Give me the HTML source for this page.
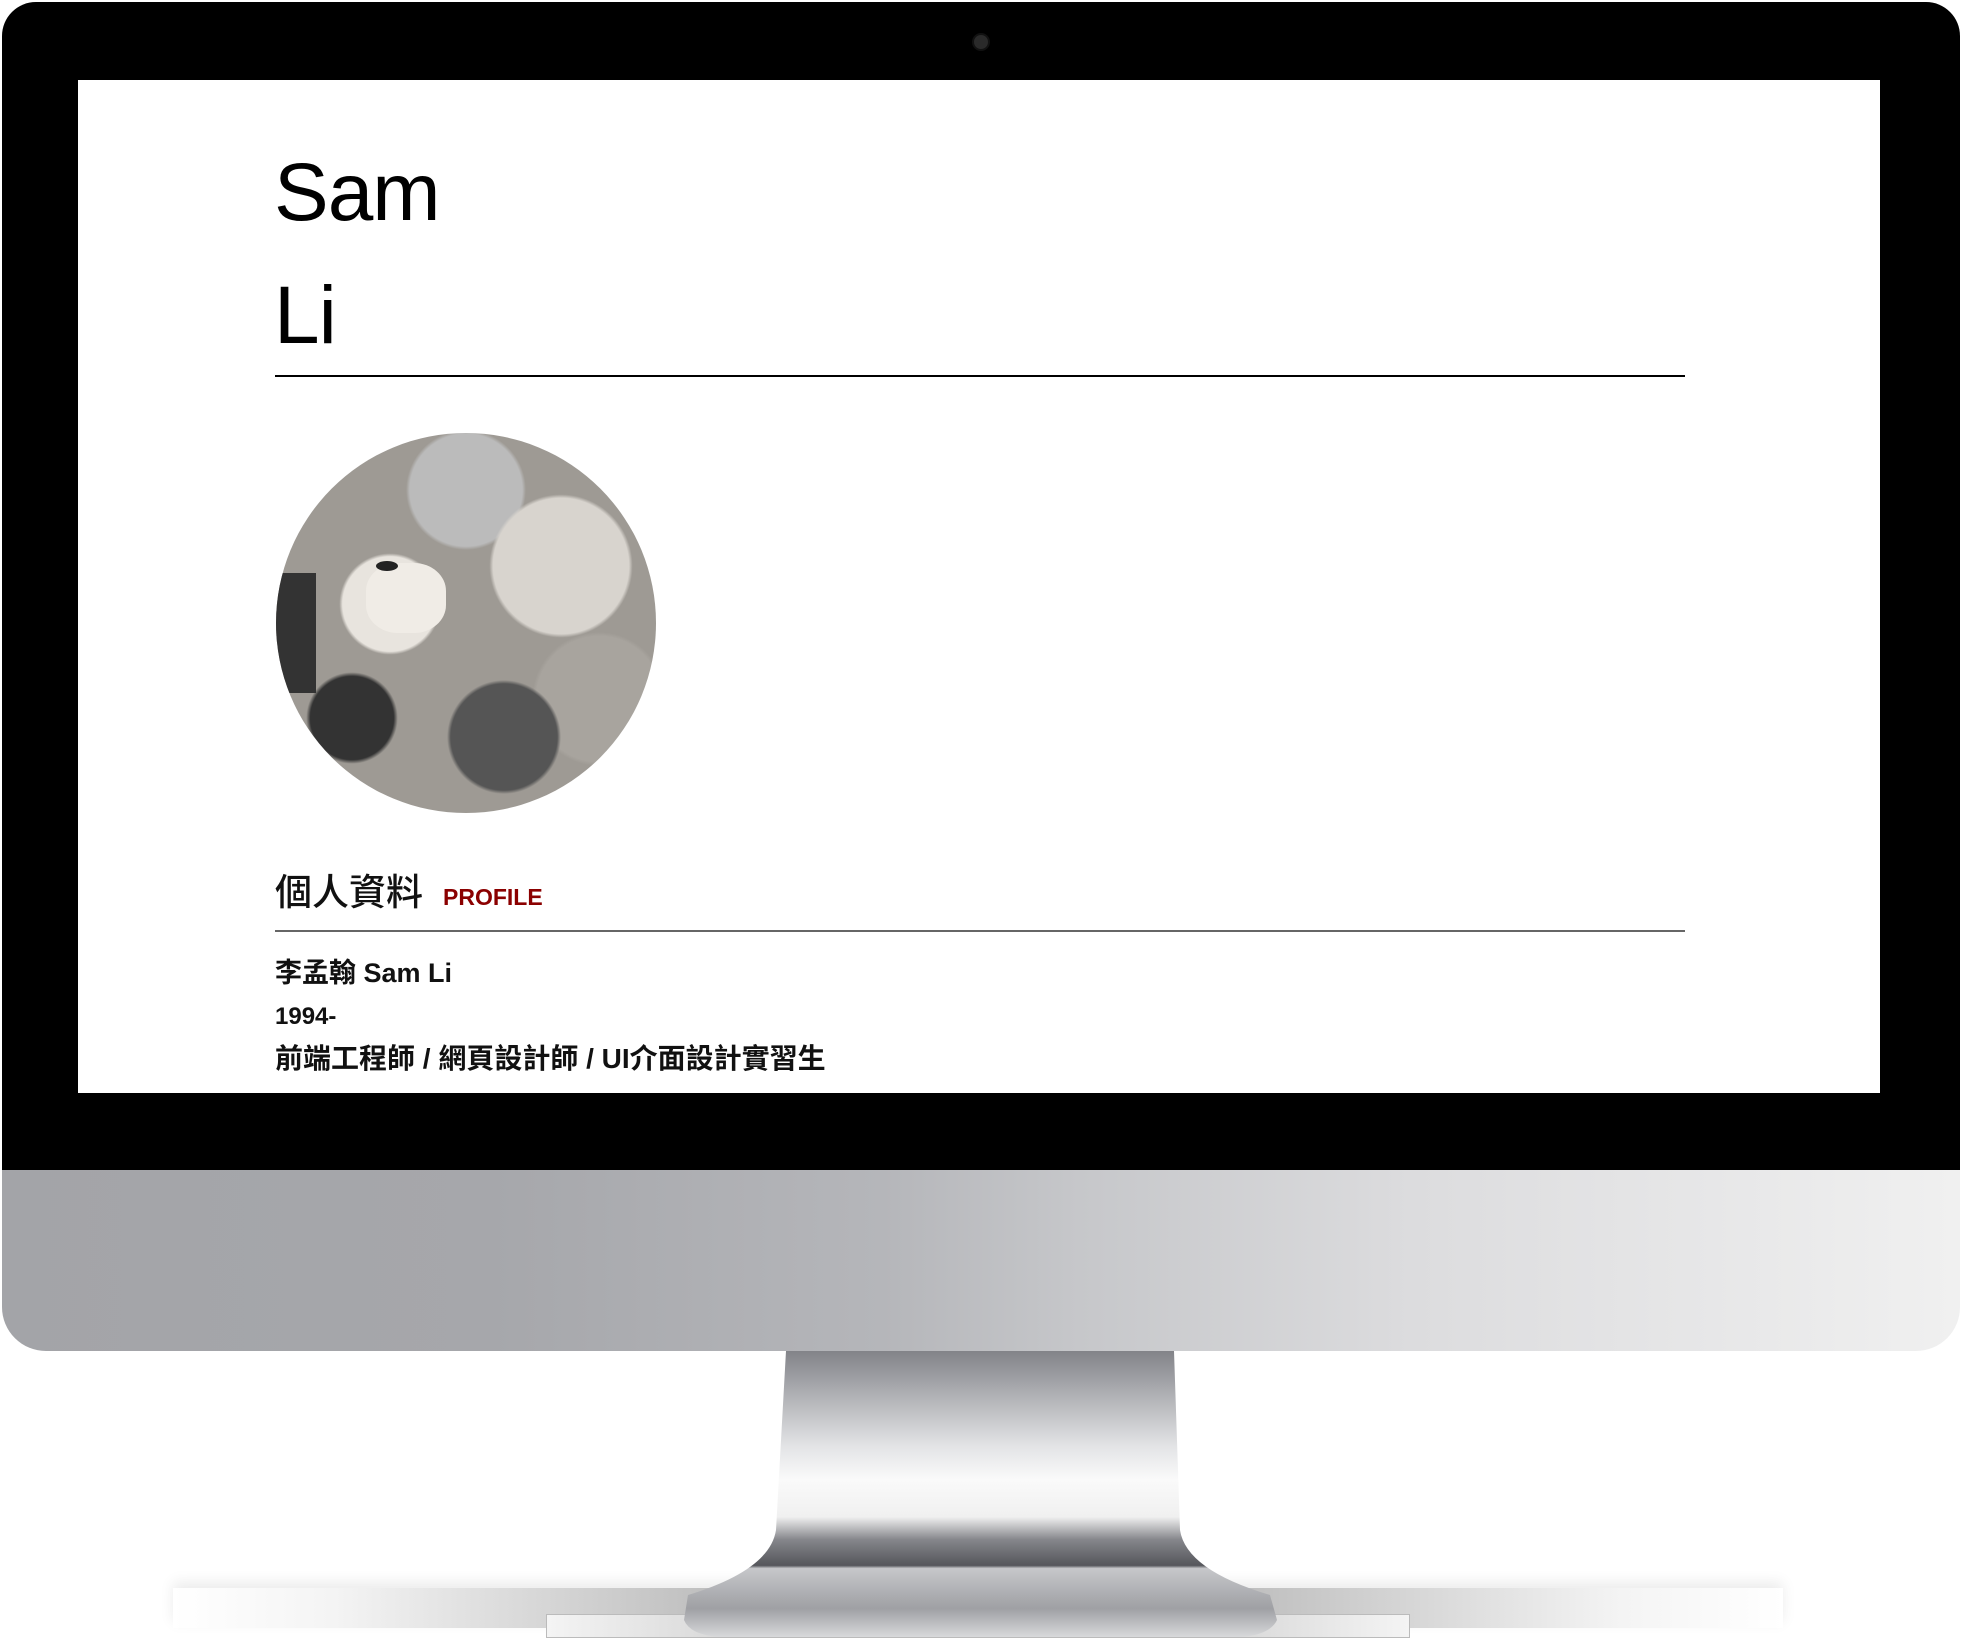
<!DOCTYPE html>
<html><head><meta charset="utf-8"><style>
*{margin:0;padding:0;box-sizing:border-box}
body{width:1963px;height:1652px;background:#fff;position:relative;overflow:hidden;font-family:"Liberation Sans","Noto Sans CJK TC",sans-serif}
.a{position:absolute}
</style></head><body>
<div class="a" style="left:2px;top:2px;width:1958px;height:1200px;background:#000;border-radius:34px 34px 0 0"></div>
<div class="a" style="left:2px;top:1170px;width:1958px;height:181px;border-radius:0 0 44px 44px;background:linear-gradient(90deg,#a3a4a8 0%,#a6a7ab 25%,#b5b6ba 45%,#c6c7ca 55%,#dcdcde 72%,#f0f0f0 100%)"></div>
<div class="a" style="left:972px;top:33px;width:18px;height:18px;border-radius:50%;background:#2a2a2a;border:2px solid #111"></div>
<div class="a" style="left:78px;top:80px;width:1802px;height:1013px;background:#fff"></div>
<div class="a" style="left:173px;top:1588px;width:1610px;height:40px;background:linear-gradient(90deg,#fff 0%,#f4f4f4 10%,#bbb 35%,#999 50%,#bbb 65%,#f4f4f4 90%,#fff 100%);box-shadow:0 -6px 14px rgba(0,0,0,.08)"></div>
<div class="a" style="left:546px;top:1614px;width:864px;height:24px;background:linear-gradient(90deg,#f4f4f4,#ccc 30%,#bbb 50%,#ccc 70%,#f4f4f4);border:1px solid #bbb"></div>
<svg class="a" style="left:0;top:0" width="1963" height="1652">
<defs>
<linearGradient id="n" x1="0" y1="0" x2="0" y2="1">
<stop offset="0" stop-color="#828388"/><stop offset=".15" stop-color="#aeafb3"/><stop offset=".33" stop-color="#e2e3e5"/><stop offset=".45" stop-color="#fafafa"/><stop offset=".58" stop-color="#f0f0f0"/><stop offset=".66" stop-color="#85868b"/><stop offset=".75" stop-color="#55565b"/><stop offset=".76" stop-color="#c6c7ca"/><stop offset=".9" stop-color="#9fa0a4"/><stop offset="1" stop-color="#d8d9db"/>
</linearGradient>
</defs>
<path d="M786 1351 L1174 1351 L1180 1530 Q1186 1570 1270 1595 L1277 1620 Q1270 1635 1240 1637 L720 1637 Q690 1635 684 1620 L688 1595 Q770 1570 776 1530 Z" fill="url(#n)"/>
</svg>
<div class="a" style="left:274px;top:131px;font-size:82px;line-height:123px;color:#000;letter-spacing:-1px">Sam<br>Li</div>
<div class="a" style="left:275px;top:375px;width:1410px;height:2px;background:#000"></div>
<div class="a" style="left:276px;top:433px;width:380px;height:380px;border-radius:50%;overflow:hidden;background:radial-gradient(circle at 30% 45%,#e8e4de 0 14%,transparent 15%),radial-gradient(circle at 75% 35%,#d8d4ce 0 18%,transparent 19%),radial-gradient(circle at 20% 75%,#333 0 10%,transparent 11%),radial-gradient(circle at 60% 80%,#555 0 14%,transparent 15%),radial-gradient(circle at 50% 15%,#bbb 0 15%,transparent 16%),radial-gradient(circle at 85% 70%,#a8a49e 0 15%,transparent 16%),#9e9a94">
<div class="a" style="left:90px;top:130px;width:80px;height:70px;border-radius:40%;background:#f0ece6"></div>
<div class="a" style="left:100px;top:128px;width:22px;height:10px;border-radius:50%;background:#222"></div>
<div class="a" style="left:0;top:140px;width:40px;height:120px;background:#333"></div>
</div>
<div class="a" style="left:275px;top:868px;font-size:37px;line-height:50px;color:#111;font-weight:500">個人資料<span style="font-size:23px;font-weight:bold;color:#8b0000;margin-left:20px">PROFILE</span></div>
<div class="a" style="left:275px;top:930px;width:1410px;height:2px;background:#666"></div>
<div class="a" style="left:275px;top:952px;font-size:27px;font-weight:bold;line-height:42px;color:#111">李孟翰 Sam Li<br><span style="font-size:24px">1994-</span><br><span style="font-size:28px">前端工程師 / 網頁設計師 / UI介面設計實習生</span></div>
</body></html>
